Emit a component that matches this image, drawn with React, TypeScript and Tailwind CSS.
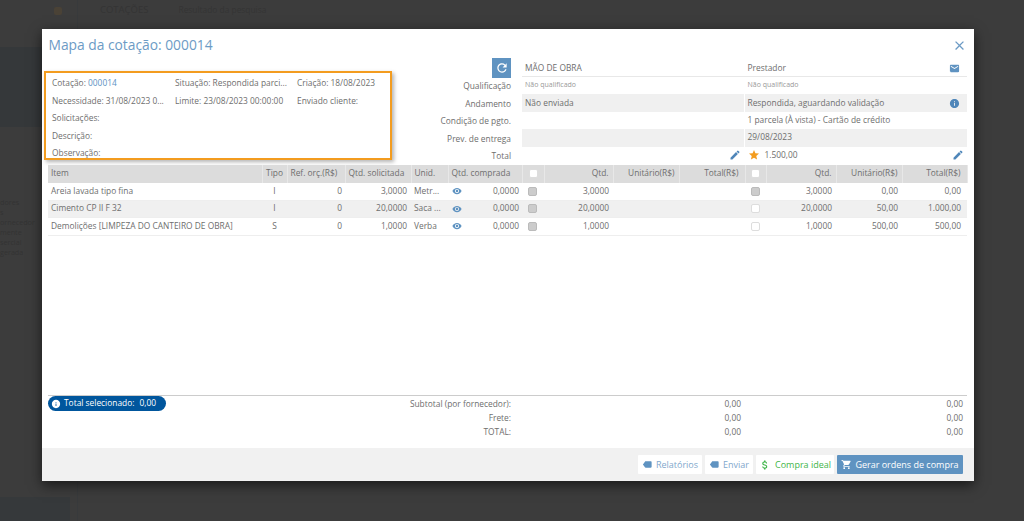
import { MdAttachMoney, MdClose, MdEdit, MdEmail, MdInfo, MdLabel, MdRefresh, MdShoppingCart, MdStar, MdVisibility } from "react-icons/md";

const items = [
  { name: "Areia lavada tipo fina", tipo: "I", ref: "0", qtd: "3,0000", unid: "Metr...", a: "3,0000", b: "3,0000", unit: "0,00", total: "0,00", check: true },
  { name: "Cimento CP II F 32", tipo: "I", ref: "0", qtd: "20,0000", unid: "Saca ...", a: "20,0000", b: "20,0000", unit: "50,00", total: "1.000,00", check: false },
  { name: "Demolições [LIMPEZA DO CANTEIRO DE OBRA]", tipo: "S", ref: "0", qtd: "1,0000", unid: "Verba", a: "1,0000", b: "1,0000", unit: "500,00", total: "500,00", check: false }
];

const labels = ["Qualificação", "Andamento", "Condição de pgto.", "Prev. de entrega", "Total"];
const colWidths = ["w-[214px]", "w-[25px]", "w-[58px]", "w-[66px]", "w-[37px]", "w-[74px]", "w-[22px]", "w-[69px]", "w-[66px]", "w-[66px]", "w-[21px]", "w-[70px]", "w-[66px]", "w-[65px]"];
const sideText = ["dores", "s", "ornecedor", "mente", "sercial", "gerada"];

function Th({ children, right, last }: { children?: React.ReactNode; right?: boolean; last?: boolean }) {
  const align = right ? (last ? "pr-[6px] text-right" : "pr-[4px] text-right") : "text-left";
  return <th className={`border-r border-[#e8e8e8] px-[3px] font-normal ${align}`}>{children}</th>;
}

function Box({ filled }: { filled?: boolean }) {
  return <span className={`mx-auto block h-[9px] w-[9px] rounded-[2px] border ${filled ? "border-[#bbb] bg-[#cccccc]" : "border-[#ddd] bg-white"}`} />;
}

function FooterButton({ children, className }: { children: React.ReactNode; className: string }) {
  return <button type="button" className={`flex h-[19px] items-center justify-center rounded-[1px] text-[9px] ${className}`}>{children}</button>;
}

export default function App() {
  return (
    <div className="relative flex h-[521px] w-[1024px] overflow-hidden bg-[#3c3c3c] font-['Open_Sans',sans-serif] text-[8.4px] text-[#6e6e6e]">
      <aside className="flex w-[78px] shrink-0 flex-col border-r border-[#383a3c]">
        <div className="flex h-[47px] shrink-0 justify-end pr-[15px] pt-[7px]">
          <span className="h-[8px] w-[8px] rounded-[2px] bg-[#4a4236]" />
        </div>
        <div className="h-[80px] shrink-0 bg-[#35383a]" />
        <div className="mt-[70px] flex flex-col text-[7.2px] leading-[10px] text-[#333333]">
          {sideText.map((t) => <span key={t}>{t}</span>)}
        </div>
        <div className="mt-auto h-[24px] w-[70px] bg-[#36393b]" />
      </aside>
      <div className="flex h-[20px] flex-1 items-center pl-[22px] text-[#343434]">
        <span className="text-[9.5px]">COTAÇÕES</span>
        <span className="ml-[30px]">Resultado da pesquisa</span>
      </div>

      <div className="absolute left-[42px] top-[29px] flex h-[452px] w-[932px] flex-col bg-white shadow-[0_4px_12px_rgba(0,0,0,0.6)]">
        <div className="flex h-[29px] shrink-0 items-center justify-between pl-[6.5px] pr-[7px] pt-[3px]">
          <h1 className="text-[13.8px] font-normal text-[#6c9bc5]">Mapa da cotação: 000014</h1>
          <MdClose className="text-[#6c9bc5]" size={15} />
        </div>

        <div className="flex h-[106px] shrink-0">
          <div className="ml-[2px] mt-[13px] h-[89px] w-[348px] shrink-0 self-start border-2 border-[#f39c1f] pl-[6px] shadow-[2px_2px_4px_rgba(0,0,0,0.3)]">
            <div className="grid auto-rows-[17.5px] grid-cols-[123px_122px_1fr] items-center pt-[2px]">
              <span>Cotação: <span className="text-[#5d92c2]">000014</span></span>
              <span>Situação: Respondida parci...</span>
              <span>Criação: 18/08/2023</span>
              <span>Necessidade: 31/08/2023 0...</span>
              <span>Limite: 23/08/2023 00:00:00</span>
              <span>Enviado cliente:</span>
              <span className="col-span-3">Solicitações:</span>
              <span className="col-span-3">Descrição:</span>
              <span className="col-span-3">Observação:</span>
            </div>
          </div>

          <div className="flex w-[119px] shrink-0 flex-col items-end">
            <button type="button" className="flex h-[20px] w-[19px] shrink-0 items-center justify-center bg-[#5f93c1] text-white">
              <MdRefresh size={14} />
            </button>
            <div className="flex shrink-0 flex-col items-end">
              {labels.map((label) => (
                <span key={label} className="flex h-[17.4px] shrink-0 items-center">{label}</span>
              ))}
            </div>
          </div>

          <div className="ml-[11px] grid w-[445px] shrink-0 grid-cols-2 grid-rows-[18.5px_17px_18px_17px_18px_17px]">
            <div className="flex items-center border-b border-[#e8e8e8] pl-[3px] pt-[3px]">MÃO DE OBRA</div>
            <div className="flex items-center justify-between border-b border-[#e8e8e8] pl-[3px] pr-[7px] pt-[3px]">
              Prestador
              <MdEmail className="text-[#5f93c1]" size={11} />
            </div>
            <div className="flex items-center pl-[3px] pt-[1px] text-[7px] text-[#999]">Não qualificado</div>
            <div className="flex items-center pl-[3px] pt-[1px] text-[7px] text-[#999]">Não qualificado</div>
            <div className="flex items-center border-r border-white bg-[#f0f0f0] pl-[3px] pt-[1px]">Não enviada</div>
            <div className="flex items-center justify-between bg-[#f0f0f0] pl-[3px] pr-[7px] pt-[1px]">
              Respondida, aguardando validação
              <MdInfo className="text-[#4f86b9]" size={11} />
            </div>
            <div />
            <div className="flex items-center pl-[3px]">1 parcela (À vista) - Cartão de crédito</div>
            <div className="border-r border-white bg-[#f0f0f0]" />
            <div className="flex items-center bg-[#f0f0f0] pl-[3px]">29/08/2023</div>
            <div className="flex items-center justify-end pr-[4px]">
              <MdEdit className="text-[#4f86b9]" size={12} />
            </div>
            <div className="flex items-center justify-between pl-[3px] pr-[3px]">
              <span className="flex items-center gap-[5px]">
                <MdStar className="text-[#f39c1f]" size={12} />
                1.500,00
              </span>
              <MdEdit className="text-[#4f86b9]" size={12} />
            </div>
          </div>
        </div>

        <table className="ml-[6px] mt-px w-[919px] shrink-0 table-fixed border-collapse">
          <colgroup>
            {colWidths.map((w, i) => <col key={i} className={w} />)}
          </colgroup>
          <thead>
            <tr className="h-[17.5px] bg-[#dcdcdc]">
              <Th>Item</Th>
              <th className="border-r border-[#e8e8e8] text-center font-normal">Tipo</th>
              <Th>Ref. orç.(R$)</Th>
              <Th>Qtd. solicitada</Th>
              <Th>Unid.</Th>
              <Th>Qtd. comprada</Th>
              <Th><Box /></Th>
              <Th right>Qtd.</Th>
              <Th right>Unitário(R$)</Th>
              <Th right last>Total(R$)</Th>
              <Th><Box /></Th>
              <Th right>Qtd.</Th>
              <Th right>Unitário(R$)</Th>
              <Th right last>Total(R$)</Th>
            </tr>
          </thead>
          <tbody>
            {items.map((item, i) => (
              <tr key={item.name} className={`h-[17.5px] border-b border-[#eee] ${i === 1 ? "bg-[#f0f0f0]" : "bg-white"}`}>
                <td className="whitespace-nowrap px-[3px]">{item.name}</td>
                <td className="text-center">{item.tipo}</td>
                <td className="pr-[3px] text-right">{item.ref}</td>
                <td className="pr-[4px] text-right">{item.qtd}</td>
                <td className="whitespace-nowrap px-[3px]">{item.unid}</td>
                <td className="pl-[3px] pr-[3px]">
                  <span className="flex items-center justify-between">
                    <MdVisibility className="ml-[1px] text-[#5f93c1]" size={10} />
                    0,0000
                  </span>
                </td>
                <td><span className="block pr-[1px]"><Box filled /></span></td>
                <td className="pr-[4px] text-right">{item.a}</td>
                <td />
                <td />
                <td><Box filled={item.check} /></td>
                <td className="pr-[4px] text-right">{item.b}</td>
                <td className="pr-[4px] text-right">{item.unit}</td>
                <td className="pr-[6px] text-right">{item.total}</td>
              </tr>
            ))}
          </tbody>
        </table>

        <div className="flex-1" />

        <div className="ml-[6px] grid h-[53px] w-[919px] shrink-0 grid-cols-[463px_234px_1fr] border-t border-[#ccc]">
          <div className="flex items-start justify-between">
            <span className="flex h-[15px] w-[118px] items-center gap-[3px] rounded-full bg-[#00569d] pl-[3px] text-white">
              <MdInfo size={10} />
              Total selecionado:
              <span className="ml-[2px]">0,00</span>
            </span>
            <div className="flex flex-col items-end pt-[1px]">
              <span className="flex h-[14px] items-center">Subtotal (por fornecedor):</span>
              <span className="flex h-[14px] items-center">Frete:</span>
              <span className="flex h-[14px] items-center">TOTAL:</span>
            </div>
          </div>
          {[0, 1].map((c) => (
            <div key={c} className="flex flex-col items-end pr-[4px] pt-[1px]">
              <span className="flex h-[14px] items-center">0,00</span>
              <span className="flex h-[14px] items-center">0,00</span>
              <span className="flex h-[14px] items-center">0,00</span>
            </div>
          ))}
        </div>

        <div className="flex h-[33px] shrink-0 items-center justify-end gap-[3px] bg-[#f1f1f1] pr-[11px]">
          <FooterButton className="w-[64px] gap-[3px] bg-white text-[#7fa7cc]">
            <MdLabel className="-scale-x-100 text-[#5f93c1]" size={11} />
            Relatórios
          </FooterButton>
          <FooterButton className="w-[48px] gap-[3px] bg-white text-[#7fa7cc]">
            <MdLabel className="-scale-x-100 text-[#5f93c1]" size={11} />
            Enviar
          </FooterButton>
          <FooterButton className="w-[78px] gap-[4px] bg-white text-[#3fb54a]">
            <MdAttachMoney size={12} />
            Compra ideal
          </FooterButton>
          <FooterButton className="w-[126px] gap-[3px] bg-[#5f93c1] text-white">
            <MdShoppingCart size={11} />
            Gerar ordens de compra
          </FooterButton>
        </div>
      </div>
    </div>
  );
}
